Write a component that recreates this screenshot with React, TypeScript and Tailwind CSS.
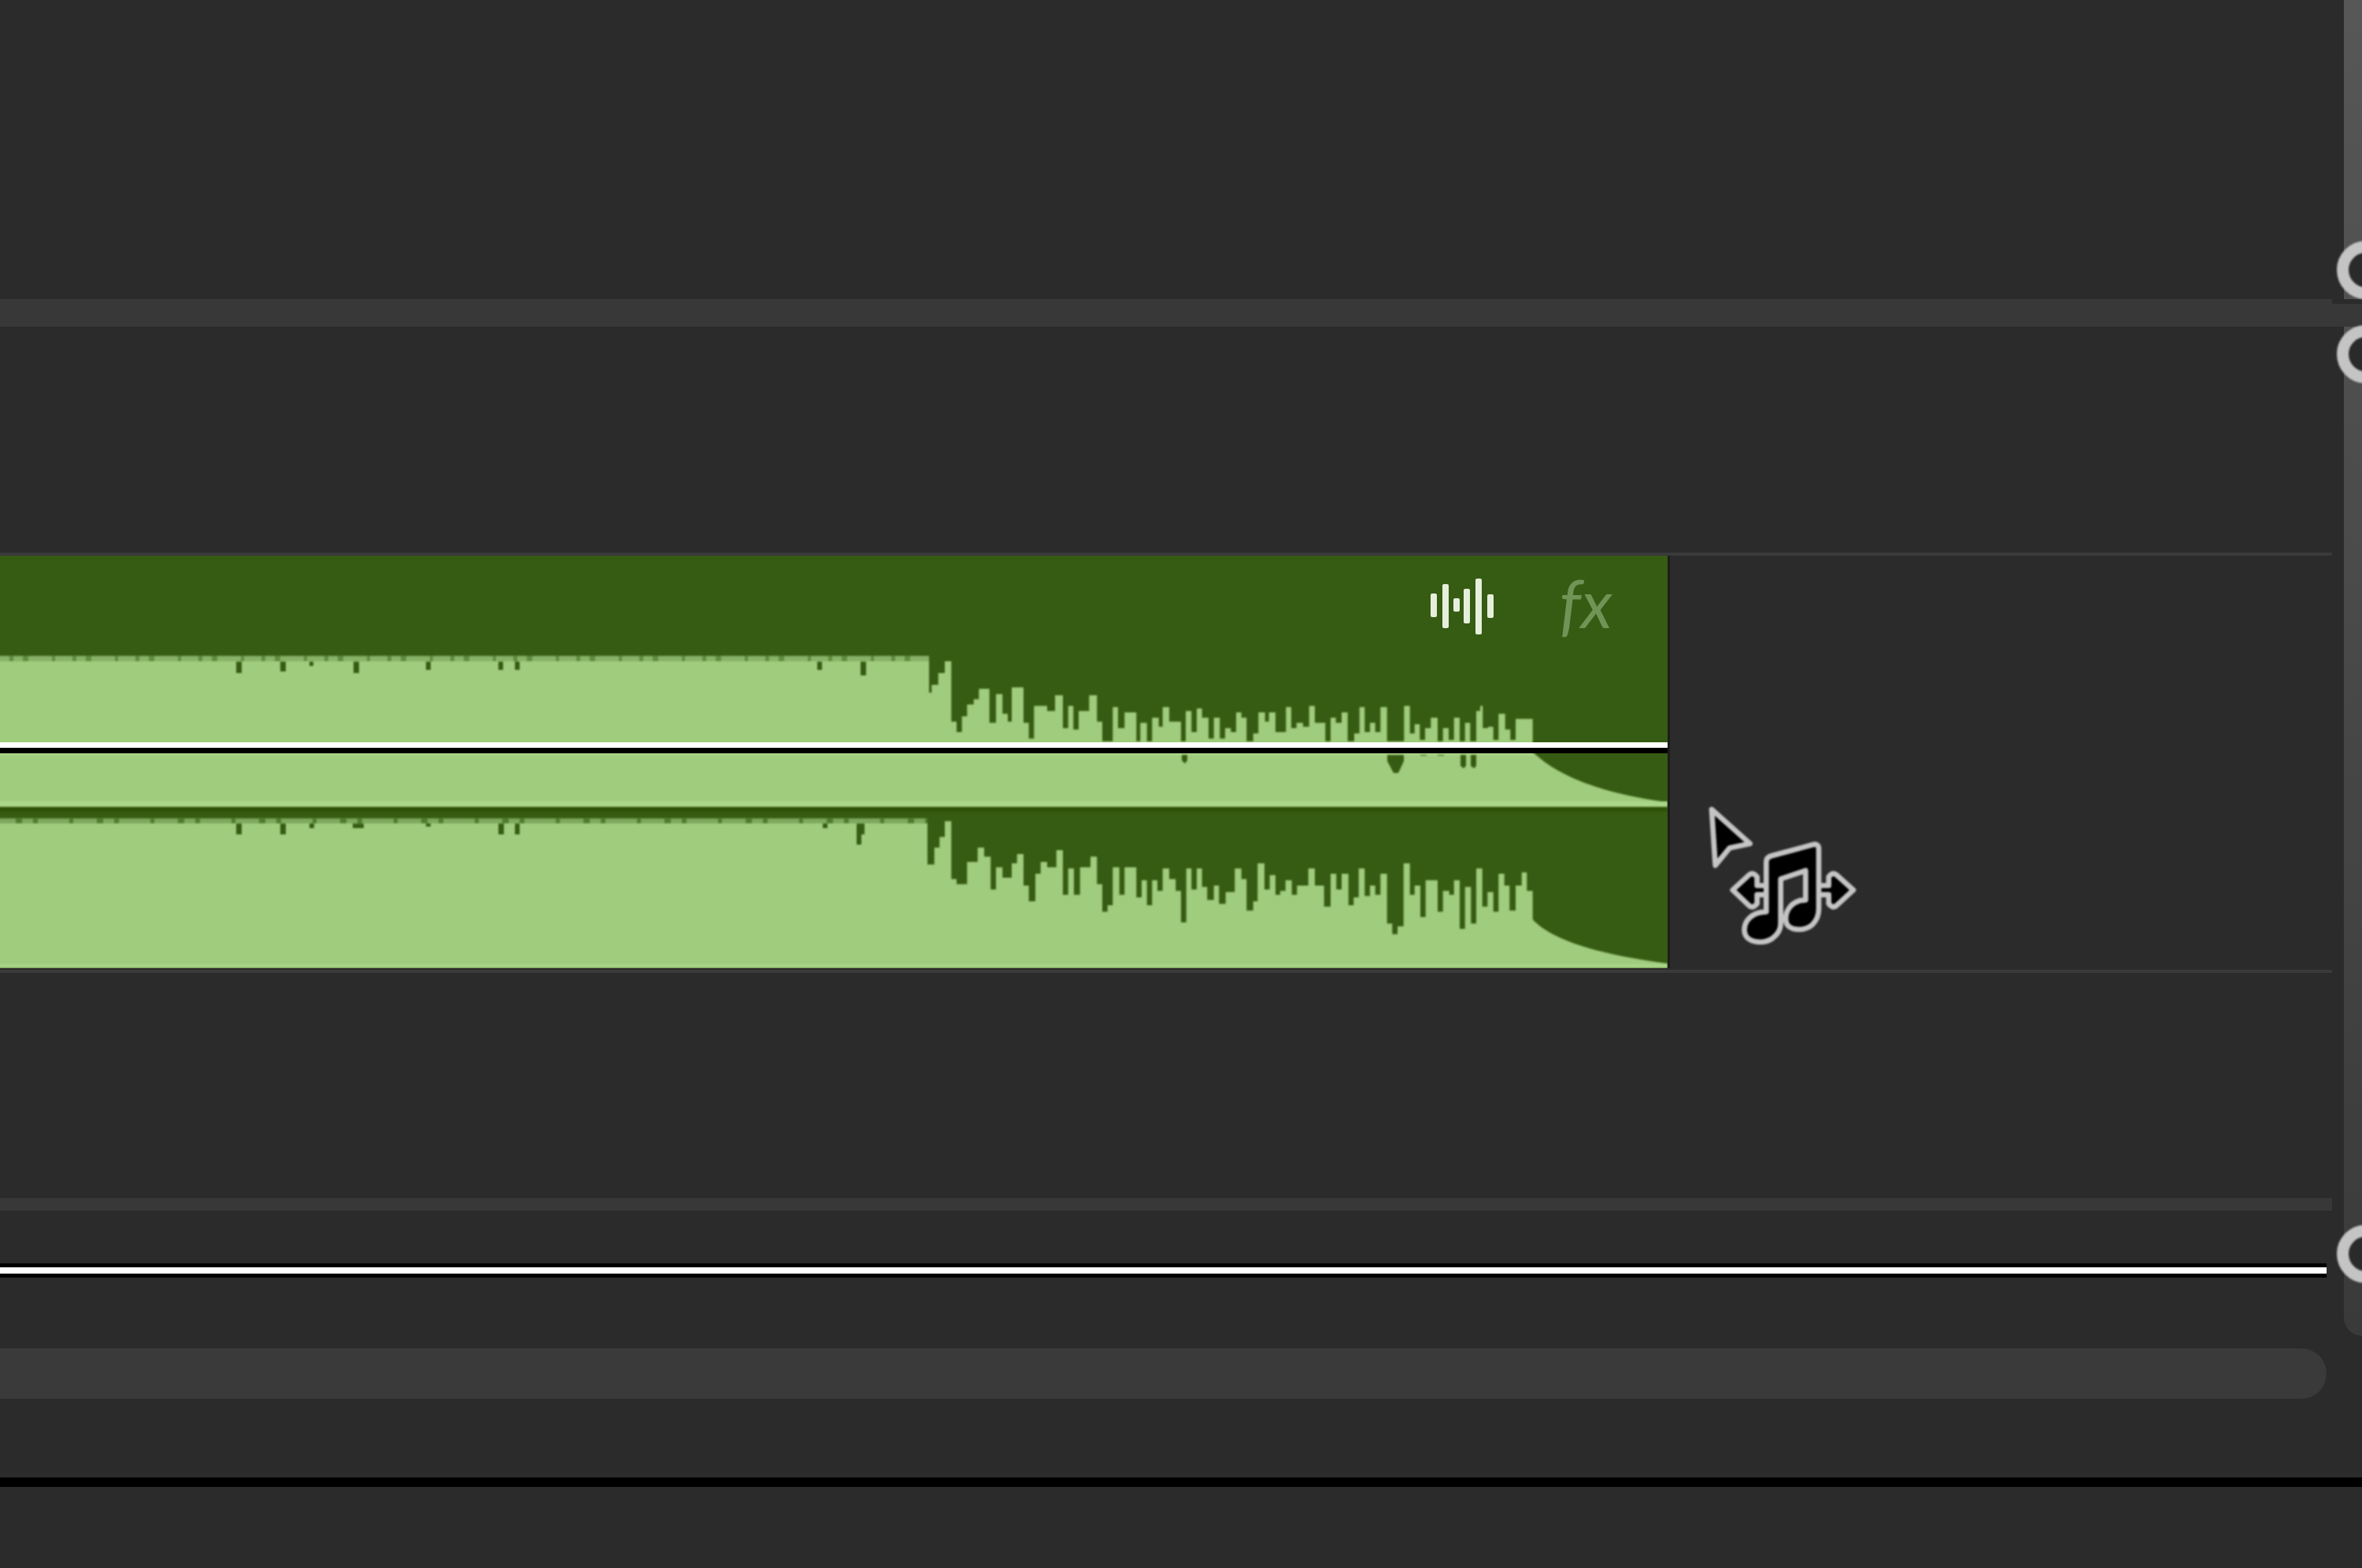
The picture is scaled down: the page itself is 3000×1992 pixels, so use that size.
type Seg = [number, number];

const z = (x0: number, y0: number, list: Seg[]): Seg[] =>
  list.map(([x, y]) => [x0 + x / 3, y0 + y / 3] as Seg);

const flat = (top: number, notches: [number, number, number][], end: number): Seg[] => {
  const out: Seg[] = [];
  notches.forEach(([x, w, d]) => {
    out.push([x, top]);
    out.push([x + w, d]);
  });
  out.push([end, top]);
  return out;
};

const steps = (segs: Seg[]) => segs.map(([x, y]) => `V${y.toFixed(1)}H${x.toFixed(1)}`).join("");

const topSegs: Seg[] = [
  ...flat(840, [[300, 7, 855], [356, 7, 853], [393, 5, 846], [449, 7, 855], [541, 6, 851], [633, 6, 851], [654, 6, 851], [1038, 6, 851], [1093, 7, 858]], 1180),
  ...z(1100, 800, [[250, 240], [275, 210], [300, 165], [325, 120], [345, 350], [365, 390], [385, 330], [410, 285], [430, 265], [470, 225], [495, 355], [520, 245], [540, 320], [555, 350], [600, 220], [620, 355], [640, 415], [690, 290], [720, 310], [750, 250], [770, 375], [790, 290], [810, 380], [850, 310], [880, 250], [900, 350], [940, 425], [960, 295], [985, 375], [1030, 315], [1045, 425], [1070, 355], [1090, 425], [1115, 335], [1130, 370], [1155, 295], [1200, 350]]),
  ...z(1480, 840, [[78, 305], [100, 190], [120, 270], [140, 180], [165, 215], [185, 295], [208, 215], [228, 295], [250, 255], [270, 270], [290, 195], [310, 215], [335, 305], [355, 275], [380, 195], [395, 230], [420, 195], [460, 270], [480, 175], [500, 255], [525, 235], [548, 250], [570, 170], [610, 235], [630, 305], [650, 215], [672, 235], [695, 195], [720, 305], [740, 275], [760, 175], [780, 270], [800, 235], [820, 270], [845, 175], [910, 305], [932, 170], [950, 275], [970, 240], [990, 300], [1012, 255], [1038, 215], [1058, 305], [1080, 255], [1100, 300], [1122, 215], [1142, 305], [1162, 235], [1185, 305], [1200, 190]]),
  ...z(1700, 680, [[550, 650], [570, 735], [590, 730], [610, 780], [635, 680], [655, 740], [675, 780], [740, 700]]),
];

const botSegs: Seg[] = [
  ...flat(1046, [[300, 7, 1060], [356, 7, 1060], [393, 6, 1052], [448, 14, 1052], [541, 6, 1050], [633, 7, 1060], [654, 6, 1060], [1045, 6, 1052], [1088, 6, 1073], [1094, 4, 1060]], 1178),
  ...z(1160, 1020, [[80, 235], [100, 170], [120, 130], [145, 70], [165, 290], [205, 310], [245, 225], [270, 170], [295, 205], [315, 330], [340, 245], [375, 285], [395, 230], [420, 195], [440, 315], [465, 375], [485, 270], [510, 225], [545, 245], [570, 180], [590, 350], [612, 250], [635, 350], [675, 245], [700, 205], [720, 310], [740, 415], [760, 390], [785, 245], [805, 350], [850, 245], [870, 360], [890, 295], [910, 390], [930, 295], [950, 335], [975, 250], [1000, 290], [1020, 335], [1040, 455], [1060, 250], [1080, 330], [1100, 250], [1120, 320], [1145, 370], [1165, 315], [1190, 385], [1200, 340]]),
  ...z(1560, 1020, [[25, 340], [50, 250], [70, 290], [95, 410], [112, 375], [138, 230], [158, 330], [180, 275], [198, 350], [218, 335], [242, 295], [262, 350], [305, 315], [330, 250], [365, 315], [390, 395], [412, 270], [432, 330], [458, 270], [478, 390], [497, 360], [520, 250], [540, 355], [560, 315], [580, 350], [605, 270], [625, 460], [645, 500], [668, 470], [692, 230], [710, 350], [732, 315], [752, 435], [798, 295], [818, 415], [842, 335], [860, 350], [882, 295], [902, 480], [925, 320], [945, 460], [968, 250], [988, 395], [1010, 340], [1030, 415], [1052, 270], [1072, 315], [1095, 410], [1118, 315], [1138, 265], [1160, 335]]),
];

const topPath = `M-10 840${steps(topSegs)}V955C1972 980 2020 1006 2118 1019V1026H-10Z`;
const botPath = `M-10 1046${steps(botSegs)}V1168C1965 1188 2010 1210 2118 1224V1230H-10Z`;

const LIGHT = "#a0cc7d";
const DARK = "#365b12";

function Waveform() {
  return (
    <svg className="absolute -left-[10px] top-0 h-full w-[2128px] blur-[0.8px]" viewBox="-10 706 2128 524" preserveAspectRatio="none">
      <rect x="-10" y="833" width="1190" height="8" fill="#5f8c3d" />
      <line x1="-10" y1="837" x2="1180" y2="837" stroke="#88b268" strokeWidth="7" strokeDasharray="22 5 12 7 30 4" />
      <rect x="-10" y="1039" width="1188" height="8" fill="#4f7c2e" />
      <line x1="-10" y1="1043" x2="1178" y2="1043" stroke="#7ea85e" strokeWidth="6" strokeDasharray="30 8 14 6 40 5" />
      <path d={topPath} fill={LIGHT} />
      <path d={botPath} fill={LIGHT} />
      <path d="M1501 957h7v9l-3 4l-4 -4zM1762 957h21v10l-7 15h-6l-8 -15zM1804 957h8v3h-8zM1826 957h8v3h-8zM1855 957h7v16l-3 3l-4 -3zM1868 957h7v16l-3 3l-4 -3z" fill={DARK} />
      <rect x="-10" y="957" width="1957" height="2" fill="#b0d892" />
      <rect x="-10" y="1018" width="2128" height="7" fill="#aad68a" />
      <rect x="-10" y="1025" width="2128" height="6" fill="#2f5209" />
      <rect x="-10" y="1225" width="2128" height="4" fill="#aad68a" />
    </svg>
  );
}

function BarsIcon() {
  const bars: [number, number, number][] = [
    [4, 754, 784],
    [19, 742, 798],
    [33, 760, 777],
    [46, 748, 792],
    [61, 735, 806],
    [76, 755, 785],
  ];
  return (
    <svg className="h-[71px] w-[80px] blur-[0.6px]" viewBox="0 735 80 71">
      {bars.map(([x, a, b]) => (
        <rect key={x} x={x - 4} y={a} width="8" height={b - a} rx="2" fill="#e6efdc" />
      ))}
    </svg>
  );
}

function DragCursor() {
  return (
    <svg className="absolute left-[2100px] top-[980px] h-[260px] w-[300px] blur-[0.9px]" viewBox="0 0 900 780" fill="#000" stroke="#c4c4c4" strokeWidth="20" strokeLinejoin="round" strokeLinecap="round">
      <path d="M222 145L368 275L290 292L236 358Z" />
      <path d="M425 435L395 435L395 402Q380 382 365 394L302 452L365 512Q380 524 395 504L395 470L425 470" />
      <path d="M640 435L668 435L668 402Q682 382 697 394L762 452L697 512Q682 524 668 504L668 470L640 470" />
      <path d="M430 345L430 535C380 535 343 568 347 610C352 655 420 660 455 635C475 620 485 600 485 580L485 410L580 378L580 490C530 490 500 530 505 570C510 610 575 610 605 585C625 565 630 545 630 525L630 295C630 280 620 275 605 280L450 322C435 326 430 335 430 345Z" />
    </svg>
  );
}

function Ring({ top }: { top: string }) {
  return <div className={`absolute left-[2968px] z-20 h-[74px] w-[74px] rounded-full border-[15px] border-[#c4c4c4] bg-[#2a2a2a] blur-[0.8px] ${top}`} />;
}

export default function App() {
  return (
    <div className="relative flex h-[1992px] w-[3000px] flex-col overflow-hidden bg-[#2b2b2b]">
      <div className="absolute right-0 top-0 h-[1697px] w-[23px] rounded-bl-[30px] bg-gradient-to-b from-[#575757] to-[#3a3a3a]" />
      <Ring top="top-[306px]" />
      <Ring top="top-[413px]" />
      <Ring top="top-[1556px]" />

      <div className="h-[380px] shrink-0" />
      <div className="relative z-10 h-[35px] shrink-0 bg-[#383838]">
        <div className="absolute right-0 top-0 h-[6px] w-[38px] bg-[#2b2b2b]" />
      </div>
      <div className="h-[287px] shrink-0" />
      <div className="h-[4px] w-[2962px] shrink-0 bg-[#3a3a3a]" />

      <div className="flex h-[524px] shrink-0">
        <div className="relative h-full w-[2118px] shrink-0 overflow-hidden bg-[#365b12]">
          <Waveform />
          <div className="absolute left-0 top-[237px] h-[7px] w-full bg-white" />
          <div className="absolute left-0 top-[244px] h-[7px] w-full bg-black" />
          <div className="absolute right-[70px] top-[29px] flex h-[71px] items-center gap-[84px]">
            <BarsIcon />
            <span className="relative top-[-6px] font-['Lato',sans-serif] text-[86px] font-normal italic leading-none text-[#6f9456] blur-[0.6px]">fx</span>
          </div>
        </div>
        <div className="h-full w-[3px] bg-[#1c1c1c]" />
      </div>

      <div className="mt-[2px] h-[4px] w-[2962px] shrink-0 bg-[#3a3a3a]" />
      <div className="h-[286px] shrink-0" />
      <div className="h-[16px] w-[2962px] shrink-0 bg-[#383838]" />
      <div className="h-[67px] shrink-0" />
      <div className="h-[5px] w-[2955px] shrink-0 bg-black" />
      <div className="h-[8px] w-[2955px] shrink-0 bg-white" />
      <div className="h-[5px] w-[2955px] shrink-0 bg-black" />
      <div className="h-[90px] shrink-0" />
      <div className="h-[64px] w-[2955px] shrink-0 rounded-r-[32px] bg-[#3a3a3a]" />
      <div className="h-[100px] shrink-0" />
      <div className="h-[12px] shrink-0 bg-black" />

      <DragCursor />
    </div>
  );
}
